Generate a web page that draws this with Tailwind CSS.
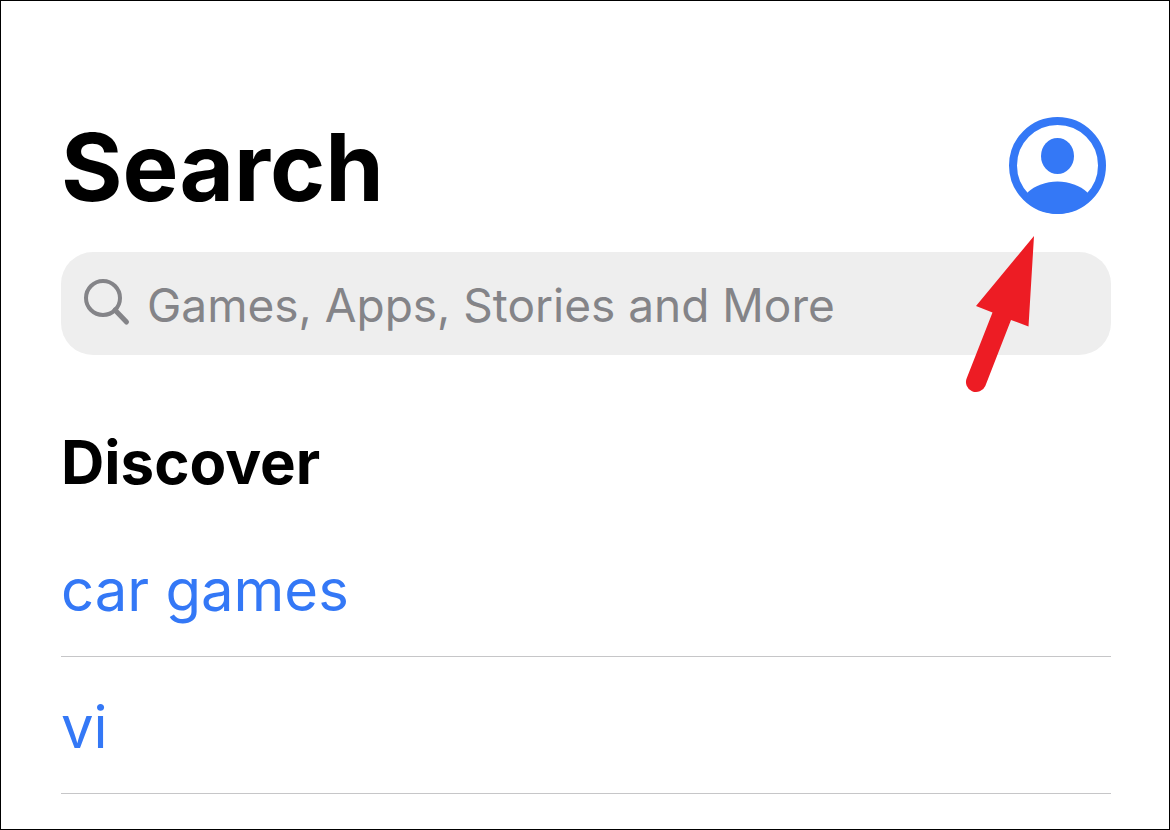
<!DOCTYPE html>
<html lang="en">
<head>
    <meta charset="UTF-8">
    <meta name="viewport" content="width=device-width, initial-scale=1">
    <title>Search</title>
    <script src="https://cdn.jsdelivr.net/npm/@tailwindcss/browser@4"></script>
</head>
<body class="bg-white font-['Inter',sans-serif]">
<main class="relative min-h-screen border border-black pt-[116px] pl-[60px] pr-[58px]">
    <header class="flex items-center justify-between pr-[5px]">
        <h1 class="pt-1 text-[94px] leading-[93px] font-bold text-black">Search</h1>
        <button type="button" aria-label="Account" class="block shrink-0">
            <svg class="block size-[97px]" viewBox="0 0 97 97" fill="none" aria-hidden="true">
                <circle cx="48.5" cy="48.5" r="44.5" stroke="#3478f6" stroke-width="8"/>
                <ellipse cx="48.5" cy="39" rx="16.5" ry="18" fill="#3478f6"/>
                <path d="M18.5 75.5C26 68.500 37 64.500 48.500 64.500S71 68.500 78.500 75.500L80 84C71 92 60 97 48.500 97S26 92 17 84Z" fill="#3478f6"/>
            </svg>
        </button>
    </header>

    <form role="search" class="mt-[38px] flex h-[103px] items-center rounded-[32px] bg-[#eeeeee] pl-[22px] pr-6">
        <label for="query" class="shrink-0 pb-[2px]">
            <svg class="block size-[48px]" viewBox="0 0 48 48" fill="none" stroke="#848488" role="img" aria-label="Search">
                <circle cx="20" cy="19" r="17" stroke-width="4"/>
                <path d="M32 31L43.500 43" stroke-width="5" stroke-linecap="round"/>
            </svg>
        </label>
        <input type="search" id="query" name="query" placeholder="Games, Apps, Stories and More"
               class="ml-2 h-full min-w-0 flex-1 bg-transparent pt-[2px] pl-2 text-[46px] text-[#848488] outline-none placeholder:text-[#848488]">
    </form>

    <section>
        <h2 class="mt-[71px] text-[60px] leading-[72px] font-bold text-black">Discover</h2>
        <ul class="mt-[22px]">
            <li class="border-b border-[#c6c6c8]">
                <a href="#" class="block pt-[34px] pb-[30px] text-[58px] leading-[72px] text-[#3478f6]">car games</a>
            </li>
            <li class="border-b border-[#c6c6c8]">
                <a href="#" class="block pt-[34px] pb-[30px] text-[58px] leading-[72px] text-[#3478f6]">vi</a>
            </li>
        </ul>
    </section>

    <!-- Pointer to the account button -->
    <svg class="absolute top-[234px] right-[133px] h-[160px] w-[72px]" viewBox="0 0 72 160" fill="#ed1c24" aria-hidden="true">
        <path d="M70 1L12 71L28.500 77.500L2.800 143A10 10 0 0 0 21.300 151L47 85L64.500 91.500Z"/>
    </svg>
</main>
</body>
</html>
